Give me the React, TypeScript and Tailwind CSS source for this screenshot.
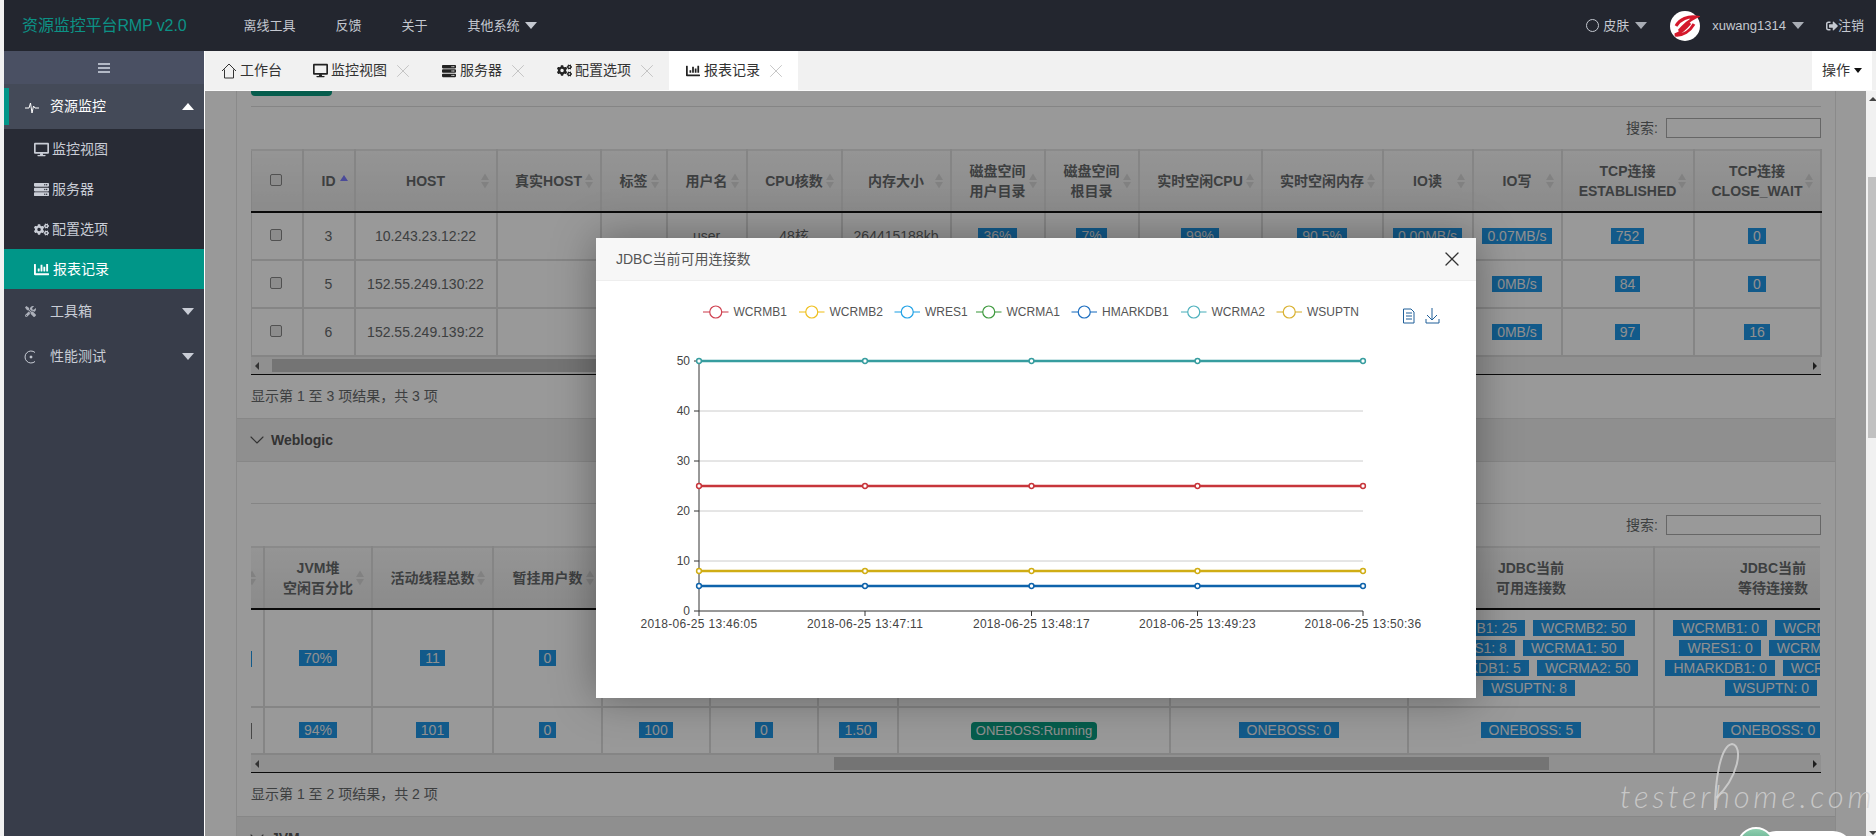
import { ChevronDown, X } from 'lucide-react'
import { FaChartBar, FaCogs, FaDesktop, FaServer, FaSignOutAlt, FaTools } from 'react-icons/fa'
import { ReactNode } from 'react'

const t1Cols = [51, 52, 142, 104, 66, 80, 95, 109, 94, 94, 123, 121, 90, 89, 132, 127]
const t1Head: ReactNode[] = [
  '', 'ID', 'HOST', '真实HOST', '标签', '用户名', 'CPU核数', '内存大小',
  <>磁盘空间<br />用户目录</>, <>磁盘空间<br />根目录</>, '实时空闲CPU', '实时空闲内存', 'IO读', 'IO写',
  <>TCP连接<br />ESTABLISHED</>, <>TCP连接<br />CLOSE_WAIT</>,
]
const t1Rows = [
  { id: '3', host: '10.243.23.12:22', user: 'user', cpu: '48核', mem: '264415188kb', b: ['36%', '7%', '99%', '90.5%', '0.00MB/s', '0.07MB/s', '752', '0'] },
  { id: '5', host: '152.55.249.130:22', user: '', cpu: '', mem: '', b: ['', '', '', '', '', '0MB/s', '84', '0'] },
  { id: '6', host: '152.55.249.139:22', user: '', cpu: '', mem: '', b: ['', '', '', '', '', '0MB/s', '97', '16'] },
]
const t2Cols = [13, 108, 121, 109, 108, 108, 80, 272, 238, 246, 238]
const t2Head: ReactNode[] = [
  '', <>JVM堆<br />空闲百分比</>, '活动线程总数', '暂挂用户数', '', '', '', '', '',
  <>JDBC当前<br />可用连接数</>, <>JDBC当前<br />等待连接数</>,
]
const avail = ['WCRMB1: 25', 'WCRMB2: 50', 'WRES1: 8', 'WCRMA1: 50', 'HMARKDB1: 5', 'WCRMA2: 50', 'WSUPTN: 8']
const wait = ['WCRMB1: 0', 'WCRMB2: 0', 'WRES1: 0', 'WCRMA1: 0', 'HMARKDB1: 0', 'WCRMA2: 0', 'WSUPTN: 0']

const legend = [
  { x: 703, name: 'WCRMB1', color: '#cf4150' },
  { x: 799, name: 'WCRMB2', color: '#efc020' },
  { x: 894.5, name: 'WRES1', color: '#22a2e6' },
  { x: 976, name: 'WCRMA1', color: '#3f9a3f' },
  { x: 1071.5, name: 'HMARKDB1', color: '#1e6fc0' },
  { x: 1181, name: 'WCRMA2', color: '#4fb1bd' },
  { x: 1276.5, name: 'WSUPTN', color: '#d9b131' },
]
const px = [699, 865, 1031.5, 1197.5, 1363]
const times = ['2018-06-25 13:46:05', '2018-06-25 13:47:11', '2018-06-25 13:48:17', '2018-06-25 13:49:23', '2018-06-25 13:50:36']
const series = [
  { y: 486, color: '#c7353b' },
  { y: 571, color: '#d0ad14' },
  { y: 586, color: '#0e63ab' },
  { y: 361, color: '#379d9f' },
]

function Badge({ children, className = '' }: { children: ReactNode; className?: string }) {
  return <span className={`inline-block h-4 whitespace-nowrap bg-[#1e96e6] px-2 text-[14px] leading-4 text-[#f0f0f0] ${className}`}>{children}</span>
}

function CaretDown({ className = '' }: { className?: string }) {
  return <span className={`inline-block h-0 w-0 border-x-[6px] border-t-[7px] border-x-transparent ${className}`} />
}

function SortArrows({ active }: { active?: boolean }) {
  if (active) {
    return (
      <svg viewBox="0 0 8 6" className="absolute right-[6px] top-[24px] h-[6px] w-[8px]">
        <path d="M4 0 L8 6 H0 Z" fill="#7d7dff" />
      </svg>
    )
  }
  return (
    <svg viewBox="0 0 8 15" className="absolute right-[7px] top-1/2 h-[15px] w-[8px] -translate-y-1/2">
      <path d="M4 0 L8 6.5 H0 Z M4 15 L8 8.5 H0 Z" fill="#d8d8d8" />
    </svg>
  )
}

function Tab({ icon, label, active, close = true }: { icon: ReactNode; label: string; active?: boolean; close?: boolean }) {
  return (
    <div className={`flex h-full items-center px-4 text-[14px] text-[#333] ${close ? '' : 'pr-[14px]'} ${active ? 'bg-white' : ''}`}>
      <span className="mr-[3px] flex w-[16px] justify-center">{icon}</span>
      {label}
      {close && <X size={22} strokeWidth={0.9} className="-mr-[5px] ml-[5px] text-[#bbb]" />}
    </div>
  )
}

function Search() {
  return (
    <div className="flex h-[42px] items-start justify-end pt-[11px] text-[14px] text-[#676a6c]">
      <span className="mr-2 leading-5">搜索:</span>
      <div className="h-5 w-[155px] border border-[#aaa]" />
    </div>
  )
}

function HScroll({ thumbLeft, thumbWidth }: { thumbLeft: string; thumbWidth: string }) {
  return (
    <div className="flex h-[18px] items-center border-b border-[#111] bg-[#f1f1f1] px-1">
      <span className="h-0 w-0 border-y-[4px] border-r-[4px] border-y-transparent border-r-[#555]" />
      <div className="relative h-[13px] flex-1">
        <div className={`absolute top-0 h-[13px] bg-[#c1c1c1] ${thumbLeft} ${thumbWidth}`} />
      </div>
      <span className="h-0 w-0 border-y-[4px] border-l-[4px] border-y-transparent border-l-[#333]" />
    </div>
  )
}

function PanelHead({ title }: { title: string }) {
  return (
    <div className="flex h-[44px] items-center border-y border-[#e2e2e2] bg-[#eeeeee] pl-2 text-[14px] font-bold text-[#555]">
      <ChevronDown size={24} strokeWidth={1.1} className="mr-[2px] text-[#555]" />
      {title}
    </div>
  )
}

const Check = () => <span className="relative -top-[2px] -left-px inline-block h-3 w-3 rounded-[2px] border border-[#888] bg-[#e9e9e9] align-middle" />

const thCls = 'relative border-r-2 border-t-2 border-b-2 border-r-[#dedede] border-t-[#e6e6e6] border-b-[#111] bg-gradient-to-b from-[#f8f8f8] to-[#e8e8e8] p-0 text-center align-middle text-[14px] font-bold leading-5 text-[#676a6c]'
const tdCls = 'overflow-hidden border-r-2 border-b-2 border-[#dedede] p-0 text-center align-middle text-[14px] text-[#676a6c]'

export default function App() {
  return (
    <div className="relative h-[836px] w-[1876px] overflow-hidden bg-[#f1f1f1] pl-1 font-['Liberation_Sans','Noto_Sans_CJK_SC',sans-serif]">
      {/* top bar */}
      <div className="flex h-[51px] items-center bg-[#23262f] pl-[18px] pr-3 text-[13px] text-[#c4c8d0]">
        <span className="text-[16px] tracking-[-0.1px] text-[#0c9286]">资源监控平台RMP v2.0</span>
        <div className="ml-[57px] flex items-center gap-[40px]">
          <span>离线工具</span>
          <span>反馈</span>
          <span>关于</span>
          <span className="flex items-center gap-[5px]">其他系统 <CaretDown className="border-t-[#c4c8d0]" /></span>
        </div>
        <div className="ml-auto flex items-center">
          <span className="h-[13px] w-[13px] rounded-full border border-[#c4c8d0]" />
          <span className="ml-1">皮肤</span>
          <CaretDown className="ml-[6px] border-t-[#a9adb5]" />
          <svg viewBox="0 0 30 30" className="ml-[23px] h-[30px] w-[30px]">
            <circle cx="15" cy="15" r="15" fill="#fff" />
            <path d="M6 15 C10 8 18 5 26 6 C20 9 14 14 9 20 M24 13 C20 20 13 25 5 24 C10 22 15 18 20 12" fill="none" stroke="#d4182b" strokeWidth="3" />
          </svg>
          <span className="ml-[12px]">xuwang1314</span>
          <CaretDown className="ml-[6px] border-t-[#a9adb5]" />
          <FaSignOutAlt size={12} className="ml-[22px] text-[#c4c8d0]" />
          <span>注销</span>
        </div>
      </div>

      <div className="flex h-[785px]">
        {/* sidebar */}
        <div className="flex w-[201px] shrink-0 flex-col border-r border-white bg-[#383d4a] text-[14px] text-[#c9cdd6]">
          <div className="flex h-[33px] items-center justify-center bg-[#4a5063]">
            <div className="flex w-[12px] flex-col gap-[2px]">
              <span className="h-[2px] bg-[#b3b9c6]" />
              <span className="h-[2px] bg-[#b3b9c6]" />
              <span className="h-[2px] bg-[#b3b9c6]" />
            </div>
          </div>
          <div className="relative flex h-[45px] items-center bg-[#444a58] pl-5 pr-[10px] text-white">
            <span className="absolute left-0 top-1 h-[37px] w-[5px] bg-[#009688]" />
            <svg viewBox="0 0 16 14" className="h-[14px] w-4 fill-none stroke-white">
              <path d="M1 8 H5 L6.5 3 L8 13 L9.5 6 L11 8 H15" />
            </svg>
            <span className="ml-[10px]">资源监控</span>
            <span className="ml-auto h-0 w-0 border-x-[6px] border-b-[7px] border-x-transparent border-b-white" />
          </div>
          <div className="bg-[#282b35]">
            <div className="flex h-10 items-center pl-[30px]"><FaDesktop size={15} className="mr-[3px]" />监控视图</div>
            <div className="flex h-10 items-center pl-[30px]"><FaServer size={15} className="mr-[3px]" />服务器</div>
            <div className="flex h-10 items-center pl-[30px]"><FaCogs size={15} className="mr-[3px]" />配置选项</div>
            <div className="flex h-10 items-center bg-[#009688] pl-[30px] text-white"><FaChartBar size={15} className="mr-[4px]" />报表记录</div>
          </div>
          <div className="flex h-[45px] items-center pl-[21px] pr-[10px]">
            <FaTools size={11} className="mr-[14px] opacity-80" />工具箱
            <CaretDown className="ml-auto border-t-[#c9cdd6]" />
          </div>
          <div className="flex h-[45px] items-center pl-5 pr-[10px]">
            <svg viewBox="0 0 14 14" className="mr-[12px] h-[14px] w-[14px] fill-none stroke-[#c9cdd6]">
              <path d="M11 2.5 A6 6 0 1 0 11 11.5" />
              <circle cx="7" cy="7" r="1" fill="#c9cdd6" />
            </svg>
            性能测试
            <CaretDown className="ml-auto border-t-[#c9cdd6]" />
          </div>
        </div>

        {/* main */}
        <div className="flex min-w-0 flex-1 flex-col">
          <div className="flex h-10 shrink-0 items-center border-b border-[#fafafa] bg-[#f1f1f1]">
            <Tab
              close={false}
              label="工作台"
              icon={
                <svg viewBox="0 0 16 16" className="h-4 w-4 fill-none stroke-[#333]">
                  <path d="M1 8 L8 1 L15 8 M3.5 6.5 V15 H12.5 V6.5" />
                </svg>
              }
            />
            <Tab label="监控视图" icon={<FaDesktop size={15} className="text-[#222]" />} />
            <Tab label="服务器" icon={<FaServer size={14} className="text-[#222]" />} />
            <Tab label="配置选项" icon={<FaCogs size={15} className="text-[#222]" />} />
            <Tab label="报表记录" active icon={<FaChartBar size={14} className="text-[#222]" />} />
            <div className="ml-auto mr-[4px] flex h-full w-[60px] items-center justify-center gap-[4px] bg-white text-[14px] text-[#333]">
              操作
              <span className="h-0 w-0 border-x-[4px] border-t-[5px] border-x-transparent border-t-[#111]" />
            </div>
          </div>

          <div className="flex min-h-0 flex-1">
            <div className="relative min-w-0 flex-1 overflow-hidden bg-white pl-[31px]">
              <div className="w-[1600px] border-x border-[#e7e7e7]">
                <div className="px-[14px]">
                  <div className="h-[5px] w-[81px] rounded-b-sm bg-[#0a9c80]" />
                  <div className="mt-[10px] border-b border-[#dedede]" />
                  <Search />
                  <table className="w-[1569px] table-fixed border-collapse border-l border-[#dedede]">
                    <colgroup>{t1Cols.map((w, i) => <col key={i} style={{ width: w }} />)}</colgroup>
                    <thead>
                      <tr className="h-[62px]">
                        {t1Head.map((h, i) => (
                          <th key={i} className={thCls}>
                            {i === 0 ? <Check /> : h}
                            {i === 1 && <SortArrows active />}
                            {i > 1 && <SortArrows />}
                          </th>
                        ))}
                      </tr>
                    </thead>
                    <tbody>
                      {t1Rows.map((r) => (
                        <tr key={r.id} className="h-[48px]">
                          <td className={tdCls}><Check /></td>
                          <td className={tdCls}>{r.id}</td>
                          <td className={tdCls}>{r.host}</td>
                          <td className={tdCls} />
                          <td className={tdCls} />
                          <td className={tdCls}>{r.user}</td>
                          <td className={tdCls}>{r.cpu}</td>
                          <td className={tdCls}>{r.mem}</td>
                          {r.b.map((v, i) => (
                            <td key={i} className={tdCls}>{v && <Badge className="!px-[5px]">{v}</Badge>}</td>
                          ))}
                        </tr>
                      ))}
                    </tbody>
                  </table>
                  <HScroll thumbLeft="left-[13px]" thumbWidth="w-[1130px]" />
                  <div className="flex h-[43px] items-center text-[14px] text-[#676a6c]">显示第 1 至 3 项结果，共 3 项</div>
                </div>

                <PanelHead title="Weblogic" />
                <div className="px-[14px]">
                  <div className="mt-[41px] border-b border-[#dedede]" />
                  <Search />
                  <div className="w-[1569px] overflow-hidden">
                    <table className="w-[1641px] table-fixed border-collapse">
                      <colgroup>{t2Cols.map((w, i) => <col key={i} style={{ width: w }} />)}</colgroup>
                      <thead>
                        <tr className="h-[62px]">
                          {t2Head.map((h, i) => (
                            <th key={i} className={thCls}>
                              {h}
                              {i < 9 && <SortArrows />}
                            </th>
                          ))}
                        </tr>
                      </thead>
                      <tbody>
                        <tr className="h-[98px]">
                          <td className={tdCls}><span className="inline-block h-4 w-px -ml-[12px] bg-[#1e96e6] align-middle" /></td>
                          <td className={tdCls}><Badge className="!px-[5px]">70%</Badge></td>
                          <td className={tdCls}><Badge className="!px-[5px]">11</Badge></td>
                          <td className={tdCls}><Badge className="!px-[5px]">0</Badge></td>
                          <td className={tdCls} />
                          <td className={tdCls} />
                          <td className={tdCls} />
                          <td className={tdCls} />
                          <td className={tdCls} />
                          <td className={tdCls}>
                            <div className="flex flex-wrap justify-center gap-x-2 gap-y-1 pl-[7px] pr-[11px]">
                              {avail.map((a) => <Badge key={a}>{a}</Badge>)}
                            </div>
                          </td>
                          <td className={tdCls}>
                            <div className="flex flex-wrap justify-center gap-x-2 gap-y-1 pl-[7px] pr-[11px]">
                              {wait.map((a) => <Badge key={a}>{a}</Badge>)}
                            </div>
                          </td>
                        </tr>
                        <tr className="h-[47px]">
                          <td className={tdCls}><span className="inline-block h-4 w-px -ml-[12px] bg-[#777] align-middle" /></td>
                          <td className={tdCls}><Badge className="!px-[5px]">94%</Badge></td>
                          <td className={tdCls}><Badge className="!px-[5px]">101</Badge></td>
                          <td className={tdCls}><Badge className="!px-[5px]">0</Badge></td>
                          <td className={tdCls}><Badge className="!px-[5px]">100</Badge></td>
                          <td className={tdCls}><Badge className="!px-[5px]">0</Badge></td>
                          <td className={tdCls}><Badge className="!px-[5px]">1.50</Badge></td>
                          <td className={tdCls}>
                            <span className="inline-block h-[18px] rounded-sm bg-[#0a9c80] px-[5px] text-[13px] leading-[18px] text-[#f0f0f0]">ONEBOSS:Running</span>
                          </td>
                          <td className={tdCls}><Badge>ONEBOSS: 0</Badge></td>
                          <td className={tdCls}><Badge>ONEBOSS: 5</Badge></td>
                          <td className={tdCls}><Badge>ONEBOSS: 0</Badge></td>
                        </tr>
                      </tbody>
                    </table>
                  </div>
                  <HScroll thumbLeft="left-[575px]" thumbWidth="w-[715px]" />
                  <div className="flex h-[43px] items-center text-[14px] text-[#676a6c]">显示第 1 至 2 项结果，共 2 项</div>
                </div>
                <PanelHead title="JVM" />
              </div>

              {/* backdrop and dialog */}
              <div className="absolute inset-0 bg-black/40" />
              <div className="absolute left-[391px] top-[147px] flex h-[460px] w-[880px] flex-col bg-white shadow-[0_0_40px_rgba(0,0,0,0.35)]">
                <div className="flex h-[43px] shrink-0 items-center justify-between border-b border-[#eeeeee] bg-[#f7f7f7] pl-5 pr-3 text-[14px] text-[#555]">
                  <span>JDBC当前可用连接数</span>
                  <X size={24} strokeWidth={1.3} className="text-[#333]" />
                </div>
                <svg viewBox="596 281 880 417" className="h-[417px] w-[880px]">
                  {legend.map((l) => (
                    <g key={l.name}>
                      <path d={`M${l.x} 312 h25.5`} stroke={l.color} strokeOpacity="0.7" strokeWidth="1.5" />
                      <circle cx={l.x + 12.75} cy="312" r="6" fill="#fff" stroke={l.color} strokeWidth="1.2" />
                      <text x={l.x + 30.5} y="316" fontSize="12" fill="#555">{l.name}</text>
                    </g>
                  ))}
                  <g fill="none" stroke="#1f5f99">
                    <path d="M1403.5 309 H1411 L1414 312 V323 H1403.5 Z M1406 313 H1412 M1406 316 H1412 M1406 319 H1412" />
                    <path d="M1432 308 V320 M1427 315 L1432 320 L1437 315 M1426 319 V323 H1439 V319" />
                  </g>
                  {[411, 461, 511, 561].map((y) => (
                    <path key={y} d={`M699 ${y} H1363`} stroke="#cccccc" />
                  ))}
                  <path d="M699 361 V611 H1363" fill="none" stroke="#333" />
                  {[361, 411, 461, 511, 561, 611].map((y, i) => (
                    <g key={y}>
                      <path d={`M694 ${y} H699`} stroke="#333" />
                      <text x="690" y={y + 4} textAnchor="end" fontSize="12" fill="#444">{50 - i * 10}</text>
                    </g>
                  ))}
                  {px.map((x, i) => (
                    <g key={x}>
                      <path d={`M${x} 611 V616`} stroke="#333" />
                      <text x={x} y="628" textAnchor="middle" fontSize="12" letterSpacing="0.3" fill="#444">{times[i]}</text>
                    </g>
                  ))}
                  {series.map((s) => (
                    <g key={s.y}>
                      <path d={`M699 ${s.y} H1363`} stroke={s.color} strokeWidth="2.4" />
                      {px.map((x) => (
                        <circle key={x} cx={x} cy={s.y} r="2.4" fill="#fff" stroke={s.color} strokeWidth="1.5" />
                      ))}
                    </g>
                  ))}
                </svg>
              </div>
            </div>

            {/* page scrollbar */}
            <div className="relative w-[10px] shrink-0 bg-[#f1f1f1]">
              <span className="absolute left-[3px] top-[6px] h-0 w-0 border-x-[4px] border-b-[4px] border-x-transparent border-b-[#444]" />
              <div className="absolute left-[2px] top-[86px] h-[261px] w-[8px] bg-[#c1c1c1]" />
              <span className="absolute bottom-[1px] left-[3px] h-0 w-0 border-x-[4px] border-t-[4px] border-x-transparent border-t-[#444]" />
            </div>
          </div>
        </div>
      </div>

      {/* watermark */}
      <span className="absolute left-[1620px] top-[778px] whitespace-nowrap font-['Lato',sans-serif] text-[31px] font-light italic leading-9 tracking-[3.7px] text-[#d4d4d4]/80">testerhome.com</span>
      <svg viewBox="0 0 40 72" className="absolute left-[1712px] top-[742px] h-[72px] w-[40px] fill-none stroke-[#d4d4d4]/80 stroke-2">
        <path d="M3 68 C3 40 8 4 20 2 C32 4 26 36 4 56" />
      </svg>

      {/* floating widget at the bottom edge */}
      <div className="absolute left-[1756px] top-[831px] h-10 w-[97px] rounded-t-[20px] bg-white" />
      <div className="absolute left-[1737px] top-[827px] h-[38px] w-[38px] rounded-full border-2 border-white bg-gradient-to-b from-[#8fd0b0] to-[#0b7a5a]" />
    </div>
  )
}
